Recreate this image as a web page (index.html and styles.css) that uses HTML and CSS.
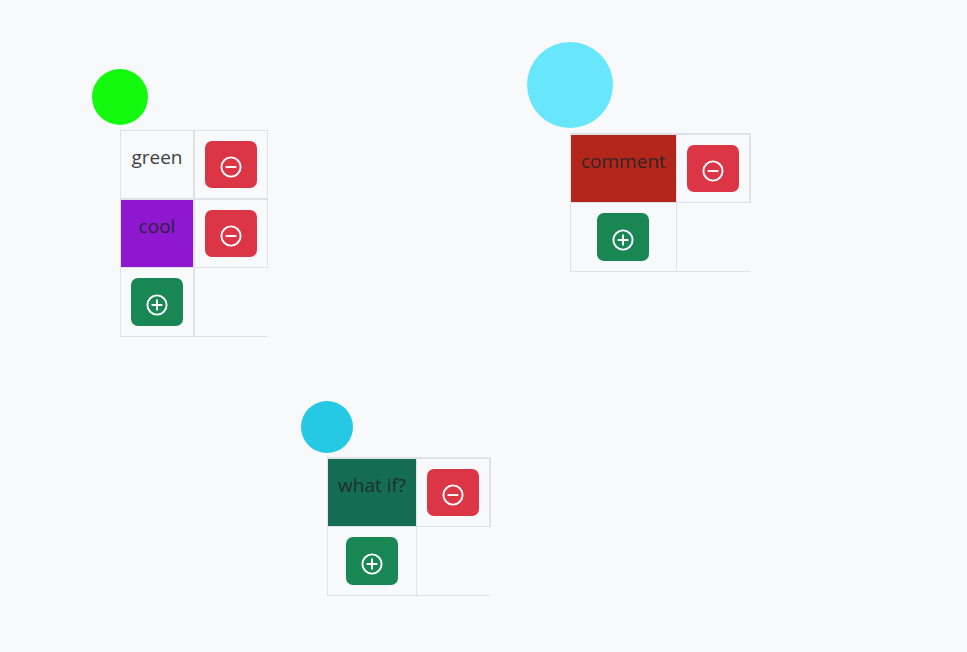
FILE: index.html
```html
<!DOCTYPE html>
<html lang="en">
<head>
<meta charset="utf-8">
<title>Nodes</title>
<link rel="stylesheet" href="styles.css">
</head>
<body>
<svg class="symbols" aria-hidden="true">
  <symbol id="minus" viewBox="0 0 22 22"><circle cx="11" cy="11" r="9.6"/><path d="M5.6 11h10.8"/></symbol>
  <symbol id="plus" viewBox="0 0 22 22"><circle cx="11" cy="11" r="9.6"/><path d="M5.6 11h10.8M11 5.6v10.8"/></symbol>
</svg>
<main class="canvas">
  <section class="node node-green">
    <div class="dot"></div>
    <table class="tags tags-split">
      <tr>
        <td class="label">green</td>
        <td><button class="btn remove" type="button" aria-label="Remove green"><svg class="icon"><use href="#minus"/></svg></button></td>
      </tr>
      <tr>
        <td class="label purple">cool</td>
        <td><button class="btn remove" type="button" aria-label="Remove cool"><svg class="icon"><use href="#minus"/></svg></button></td>
      </tr>
      <tr>
        <td><button class="btn add" type="button" aria-label="Add tag"><svg class="icon"><use href="#plus"/></svg></button></td>
        <td class="empty"></td>
      </tr>
    </table>
  </section>

  <section class="node node-sky">
    <div class="dot"></div>
    <table class="tags tags-framed">
      <tr>
        <td class="label red">comment</td>
        <td><button class="btn remove" type="button" aria-label="Remove comment"><svg class="icon"><use href="#minus"/></svg></button></td>
      </tr>
      <tr>
        <td><button class="btn add" type="button" aria-label="Add tag"><svg class="icon"><use href="#plus"/></svg></button></td>
        <td class="empty"></td>
      </tr>
    </table>
  </section>

  <section class="node node-cyan">
    <div class="dot"></div>
    <table class="tags tags-framed">
      <tr>
        <td class="label teal">what if?</td>
        <td><button class="btn remove" type="button" aria-label="Remove what if?"><svg class="icon"><use href="#minus"/></svg></button></td>
      </tr>
      <tr>
        <td><button class="btn add" type="button" aria-label="Add tag"><svg class="icon"><use href="#plus"/></svg></button></td>
        <td class="empty"></td>
      </tr>
    </table>
  </section>
</main>
</body>
</html>
```
FILE: styles.css
```css
* {
  box-sizing: border-box;
}

body {
  margin: 0;
  background: #f8f9fb;
  color: #212529;
  font: 19px/32px "Open Sans", "Noto Sans", sans-serif;
}

.symbols {
  position: absolute;
  width: 0;
  height: 0;
}

.canvas {
  position: relative;
  min-height: 100vh;
}

/* Nodes are placed freely on the canvas */
.node {
  position: absolute;
}

.node-green {
  --size: 56px;
  --gap: 5px;
  --fill: #14fa0e;
  left: 92px;
  top: 69px;
}

.node-sky {
  --size: 86px;
  --gap: 5px;
  --fill: #68e6fb;
  left: 527px;
  top: 42px;
}

.node-cyan {
  --size: 52px;
  --gap: 4px;
  --fill: #26c9e4;
  left: 301px;
  top: 401px;
}

.dot {
  width: var(--size);
  height: var(--size);
  margin-bottom: var(--gap);
  border-radius: 50%;
  background: var(--fill);
}

.tags {
  margin-left: calc(var(--size) / 2);
  border-spacing: 0;
  border: 0 solid #dee2e6;
  border-width: 1px 0 0 1px;
}

.tags td {
  padding: 10px;
  border: 0 solid #dee2e6;
  border-width: 0 1px 1px 0;
  text-align: center;
  vertical-align: top;
  white-space: nowrap;
}

.tags-split td:first-child {
  border-right-width: 2px;
}

.tags-split tr:first-child td {
  border-bottom-width: 2px;
}

.tags-framed {
  border-top-width: 2px;
}

.tags-framed td:last-child {
  border-right-width: 2px;
}

.tags .empty {
  border-right-color: transparent;
}

.label {
  color: #212529e6;
}

.purple {
  background: #8f17cf;
  background-clip: padding-box;
}

.red {
  background: #b3261c;
  background-clip: padding-box;
}

.teal {
  background: #146c52;
  background-clip: padding-box;
}

.btn {
  display: flex;
  align-items: center;
  justify-content: center;
  width: 52px;
  height: 47px;
  margin: 0 auto;
  padding: 6px 0 0;
  border: 0;
  border-radius: 7px;
}

.remove {
  padding-top: 5px;
  background: #dc3545;
}

.add {
  height: 48px;
  background: #198754;
}

.icon {
  width: 22px;
  height: 22px;
  fill: none;
  stroke: #fff;
  stroke-width: 1.9;
}
```
